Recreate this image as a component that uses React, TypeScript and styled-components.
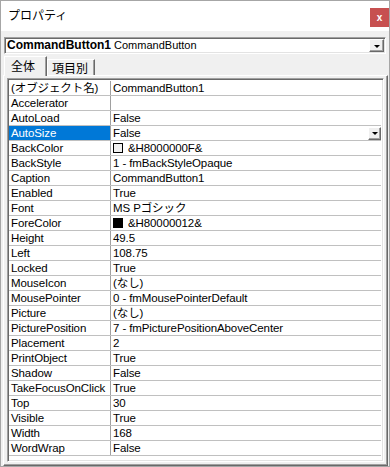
import React from 'react';
import styled, { createGlobalStyle } from 'styled-components';

const GlobalStyle = createGlobalStyle`
  html, body {
    margin: 0;
    padding: 0;
    background: #ffffff;
  }
  body {
    font-family: "Liberation Sans", "Noto Sans CJK JP", sans-serif;
    font-size: 12px;
    color: #000;
  }
`;

const Window = styled.div`
  width: 390px;
  height: 467px;
  box-sizing: border-box;
  border: 1px solid #a6a6a6;
  display: flex;
  flex-direction: column;
  background: #f0f0f0;
  overflow: hidden;
`;

const TitleBar = styled.div`
  height: 30px;
  flex-shrink: 0;
  background: #ffffff;
  display: flex;
  align-items: center;
  justify-content: space-between;
  padding-left: 7px;
`;

const Title = styled.span`
  font-family: "Noto Sans CJK JP", sans-serif;
  font-size: 12px;
  line-height: 16px;
  margin-top: -2px;
`;

const CloseButton = styled.div`
  align-self: flex-start;
  margin-top: 7px;
  width: 19px;
  height: 19px;
  background: #c75050;
  color: #fff;
  display: flex;
  align-items: center;
  justify-content: center;
  font-family: "Liberation Sans", sans-serif;
  font-weight: bold;
  font-size: 10px;
  line-height: 10px;
`;

const Body = styled.div`
  flex: 1;
  display: flex;
  flex-direction: column;
  padding: 0 1px;
  min-height: 0;
`;

const Combo = styled.div`
  margin: 6px 2px 0 2px;
  height: 17px;
  box-sizing: border-box;
  border: 1px solid;
  border-color: #a0a0a0 #ffffff #ffffff #a0a0a0;
  box-shadow: inset 1px 1px 0 #696969, inset -1px -1px 0 #e3e3e3;
  background: #fff;
  display: flex;
  align-items: center;
  padding: 1px 1px 1px 2px;
`;

const ComboText = styled.div`
  flex: 1;
  white-space: nowrap;
  line-height: 13px;
  font-size: 11px;
  b {
    font-weight: bold;
    font-size: 12px;
  }
`;

const DropButton = styled.div<{ small?: boolean }>`
  width: ${p => (p.small ? 13 : 15)}px;
  height: 13px;
  box-sizing: border-box;
  background: #f0f0f0;
  border: 1px solid;
  border-color: #ffffff #696969 #696969 #ffffff;
  box-shadow: inset -1px -1px 0 #a0a0a0;
  display: flex;
  align-items: center;
  justify-content: center;
  flex-shrink: 0;
`;

const Arrow = styled.div`
  width: 0;
  height: 0;
  border-left: 3px solid transparent;
  border-right: 3px solid transparent;
  border-top: 3px solid #000;
  margin-top: 1px;
`;

const TabStrip = styled.div`
  margin: 2px 2px 0 2px;
  height: 19px;
  display: flex;
  align-items: flex-end;
  position: relative;
  z-index: 1;
`;

const Tab = styled.div<{ active?: boolean }>`
  box-sizing: border-box;
  height: ${p => (p.active ? 20 : 16)}px;
  margin-bottom: ${p => (p.active ? -1 : 0)}px;
  padding: 0 ${p => (p.active ? '11px 2px 6px' : '6px 0 4px')};
  background: #f0f0f0;
  border: 1px solid;
  border-bottom: none;
  border-color: #ffffff #696969 transparent #ffffff;
  box-shadow: inset -1px 0 0 #a0a0a0;
  display: flex;
  align-items: center;
  font-family: "Noto Sans CJK JP", sans-serif;
  font-size: 12px;
  line-height: 14px;
`;

const TabPanel = styled.div`
  margin: 0 0 0 1px;
  flex: 1;
  box-sizing: border-box;
  border: 1px solid;
  border-color: #ffffff #696969 #696969 #ffffff;
  box-shadow: inset -1px -1px 0 #a0a0a0;
  padding: 2px 3px 3px 3px;
  display: flex;
  min-height: 0;
`;

const Grid = styled.div`
  flex: 1;
  box-sizing: border-box;
  border: 1px solid;
  border-color: #a0a0a0 #ffffff #ffffff #a0a0a0;
  box-shadow: inset 1px 1px 0 #696969, inset -1px -1px 0 #e3e3e3;
  background: #fff;
  padding: 2px 2px 1px 1px;
  font-size: 11.5px;
  letter-spacing: -0.1px;
`;

const Row = styled.div`
  display: grid;
  grid-template-columns: 102px 1fr;
  height: 15px;
  box-sizing: border-box;
  border-bottom: 1px solid #c0c0c0;
`;

const NameCell = styled.div<{ selected?: boolean }>`
  border-right: 1px solid #a0a0a0;
  padding-left: 2px;
  line-height: 14px;
  white-space: nowrap;
  background: ${p => (p.selected ? '#0078d7' : 'transparent')};
  color: ${p => (p.selected ? '#ffffff' : '#000000')};
`;

const ValueCell = styled.div`
  padding-left: 2px;
  display: flex;
  align-items: center;
  line-height: 14px;
  white-space: nowrap;
`;

const ValueText = styled.span`
  flex: 1;
`;

const Swatch = styled.span<{ color: string }>`
  width: 10px;
  height: 10px;
  box-sizing: border-box;
  border: 1px solid #000;
  background: ${p => p.color};
  margin-right: 5px;
  flex-shrink: 0;
`;

type Prop = {
  name: string;
  value: string;
  swatch?: string;
  selected?: boolean;
};

const props: Prop[] = [
  { name: '(オブジェクト名)', value: 'CommandButton1' },
  { name: 'Accelerator', value: '' },
  { name: 'AutoLoad', value: 'False' },
  { name: 'AutoSize', value: 'False', selected: true },
  { name: 'BackColor', value: '&H8000000F&', swatch: '#f0f0f0' },
  { name: 'BackStyle', value: '1 - fmBackStyleOpaque' },
  { name: 'Caption', value: 'CommandButton1' },
  { name: 'Enabled', value: 'True' },
  { name: 'Font', value: 'MS Pゴシック' },
  { name: 'ForeColor', value: '&H80000012&', swatch: '#000000' },
  { name: 'Height', value: '49.5' },
  { name: 'Left', value: '108.75' },
  { name: 'Locked', value: 'True' },
  { name: 'MouseIcon', value: '(なし)' },
  { name: 'MousePointer', value: '0 - fmMousePointerDefault' },
  { name: 'Picture', value: '(なし)' },
  { name: 'PicturePosition', value: '7 - fmPicturePositionAboveCenter' },
  { name: 'Placement', value: '2' },
  { name: 'PrintObject', value: 'True' },
  { name: 'Shadow', value: 'False' },
  { name: 'TakeFocusOnClick', value: 'True' },
  { name: 'Top', value: '30' },
  { name: 'Visible', value: 'True' },
  { name: 'Width', value: '168' },
  { name: 'WordWrap', value: 'False' },
];

const App: React.FC = () => {
  return (
    <>
      <GlobalStyle />
      <Window>
        <TitleBar>
          <Title>プロパティ</Title>
          <CloseButton>x</CloseButton>
        </TitleBar>
        <Body>
          <Combo>
            <ComboText>
              <b>CommandButton1</b> CommandButton
            </ComboText>
            <DropButton>
              <Arrow />
            </DropButton>
          </Combo>
          <TabStrip>
            <Tab active>全体</Tab>
            <Tab>項目別</Tab>
          </TabStrip>
          <TabPanel>
            <Grid>
              {props.map(p => (
                <Row key={p.name}>
                  <NameCell selected={p.selected}>{p.name}</NameCell>
                  <ValueCell>
                    {p.swatch && <Swatch color={p.swatch} />}
                    <ValueText>{p.value}</ValueText>
                    {p.selected && (
                      <DropButton small>
                        <Arrow />
                      </DropButton>
                    )}
                  </ValueCell>
                </Row>
              ))}
            </Grid>
          </TabPanel>
        </Body>
      </Window>
    </>
  );
};

export default App;
